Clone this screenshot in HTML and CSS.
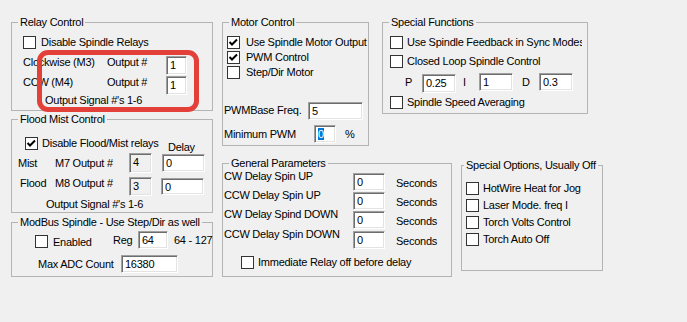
FILE: index.html
```html
<!DOCTYPE html>
<html lang="en">
<head>
<meta charset="UTF-8">
<title>Spindle Setup</title>
<link rel="stylesheet" href="styles.css">
</head>
<body>

<div class="dialog">

  <div class="col-left">
    <fieldset class="group relay">
      <legend>Relay Control</legend>
      <div class="row relay-cb"><span class="cb"></span><span class="cb-text">Disable Spindle Relays</span></div>
      <div class="row relay-out first">
        <span class="lbl w84">Clockwise (M3)</span>
        <span class="lbl w59">Output #</span>
        <span class="tb w21 h19">1</span>
      </div>
      <div class="row relay-out">
        <span class="lbl w84">CCW (M4)</span>
        <span class="lbl w59">Output #</span>
        <span class="tb w21 h19">1</span>
      </div>
      <div class="row relay-sig"><span class="lbl">Output Signal #'s 1-6</span></div>
    </fieldset>

    <fieldset class="group flood">
      <legend>Flood Mist Control</legend>
      <div class="row flood-cb">
        <span class="cb checked"><svg width="11" height="11" viewBox="0 0 11 11"><polyline points="1.5,5 4,7.5 9,2.5" fill="none" stroke="#000" stroke-width="2"/></svg></span>
        <span class="cb-text w126">Disable Flood/Mist relays</span>
        <span class="lbl delay">Delay</span>
      </div>
      <div class="row mist-row">
        <span class="lbl w37 dn4">Mist</span>
        <span class="lbl w74 dn4">M7 Output #</span>
        <span class="tb ro w23 h20">4</span>
        <span class="tb w43 h18 delay-box">0</span>
      </div>
      <div class="row flood-row">
        <span class="lbl w35">Flood</span>
        <span class="lbl w74">M8 Output #</span>
        <span class="tb ro w23 h19">3</span>
        <span class="tb w43 h17 delay-box2">0</span>
      </div>
      <div class="row flood-sig"><span class="lbl">Output Signal #'s 1-6</span></div>
    </fieldset>

    <fieldset class="group modbus">
      <legend>ModBus Spindle - Use Step/Dir as well</legend>
      <div class="row modbus-row">
        <span class="cb dn4"></span>
        <span class="cb-text enabled">Enabled</span>
        <span class="lbl w25 dn3">Reg</span>
        <span class="tb w30 h18">64</span>
        <span class="lbl range dn3">64 - 127</span>
      </div>
      <div class="row adc-row">
        <span class="lbl w83 dn3">Max ADC Count</span>
        <span class="tb w57 h18">16380</span>
      </div>
    </fieldset>
  </div>

  <div class="col-right">
    <div class="top-row">
      <fieldset class="group motor">
        <legend>Motor Control</legend>
        <div class="row motor-cb first">
          <span class="cb checked"><svg width="11" height="11" viewBox="0 0 11 11"><polyline points="1.5,5 4,7.5 9,2.5" fill="none" stroke="#000" stroke-width="2"/></svg></span>
          <span class="cb-text">Use Spindle Motor Output</span>
        </div>
        <div class="row motor-cb">
          <span class="cb checked"><svg width="11" height="11" viewBox="0 0 11 11"><polyline points="1.5,5 4,7.5 9,2.5" fill="none" stroke="#000" stroke-width="2"/></svg></span>
          <span class="cb-text">PWM Control</span>
        </div>
        <div class="row motor-cb">
          <span class="cb"></span>
          <span class="cb-text">Step/Dir Motor</span>
        </div>
        <div class="row pwm-row">
          <span class="lbl w84 dn2">PWMBase Freq.</span>
          <span class="tb w55 h18">5</span>
        </div>
        <div class="row minpwm-row">
          <span class="lbl w90 dn3">Minimum PWM</span>
          <span class="tb w22 h18"><span class="sel">0</span></span>
          <span class="lbl pct dn3">%</span>
        </div>
      </fieldset>

      <fieldset class="group special-fn">
        <legend>Special Functions</legend>
        <div class="row sf-cb first">
          <span class="cb"></span>
          <span class="cb-text clip">Use Spindle Feedback in Sync Modes</span>
        </div>
        <div class="row sf-cb">
          <span class="cb"></span>
          <span class="cb-text">Closed Loop Spindle Control</span>
        </div>
        <div class="row pid-row">
          <span class="lbl w17 dn3">P</span>
          <span class="tb w34 h19 dn1">0.25</span>
          <span class="lbl w16 dn3 pid-i">I</span>
          <span class="tb w34 h18">1</span>
          <span class="lbl w17 dn3 pid-d">D</span>
          <span class="tb w34 h18">0.3</span>
        </div>
        <div class="row sf-cb last">
          <span class="cb"></span>
          <span class="cb-text">Spindle Speed Averaging</span>
        </div>
      </fieldset>
    </div>

    <div class="bottom-row">
      <fieldset class="group general">
        <legend>General Parameters</legend>
        <div class="row gp-row r1">
          <span class="lbl w129 up3">CW Delay Spin UP</span>
          <span class="tb w32 h18">0</span>
          <span class="lbl secs">Seconds</span>
        </div>
        <div class="row gp-row r2">
          <span class="lbl w129 up3">CCW Delay Spin UP</span>
          <span class="tb w32 h18">0</span>
          <span class="lbl secs">Seconds</span>
        </div>
        <div class="row gp-row r2">
          <span class="lbl w129 up3">CW Delay Spind DOWN</span>
          <span class="tb w32 h18">0</span>
          <span class="lbl secs">Seconds</span>
        </div>
        <div class="row gp-row r4">
          <span class="lbl w129 up3">CCW Delay Spin DOWN</span>
          <span class="tb w32 h18">0</span>
          <span class="lbl secs">Seconds</span>
        </div>
        <div class="row gp-cb">
          <span class="cb"></span>
          <span class="cb-text">Immediate Relay off before delay</span>
        </div>
      </fieldset>

      <fieldset class="group options">
        <legend>Special Options, Usually Off</legend>
        <div class="row opt-cb first"><span class="cb"></span><span class="cb-text">HotWire Heat for Jog</span></div>
        <div class="row opt-cb"><span class="cb"></span><span class="cb-text">Laser Mode. freq I</span></div>
        <div class="row opt-cb"><span class="cb"></span><span class="cb-text">Torch Volts Control</span></div>
        <div class="row opt-cb"><span class="cb"></span><span class="cb-text">Torch Auto Off</span></div>
      </fieldset>
    </div>
  </div>

  <div class="callout"></div>
</div>

</body>
</html>
```

FILE: styles.css
```css
* {
  box-sizing: border-box;
}
body {
  margin: 0;
  background-color: #f0f0f0;
  font-family: "Liberation Sans", Arial, sans-serif;
  font-size: 11px;
  letter-spacing: -0.25px;
  line-height: 13px;
  color: #000;
}
.dialog {
  position: relative;
  display: flex;
  gap: 9px;
  padding: 16px 0 0 11px;
  height: 322px;
}

/* group boxes */
.group {
  margin: 0;
  padding: 0;
  min-width: 0;
  border: 1px solid #b4b4b4;
}
.group legend {
  margin-left: 6px;
  padding: 0 2px;
  line-height: 13px;
  white-space: nowrap;
}
.col-left {
  display: flex;
  flex-direction: column;
  width: 202px;
}
.relay { height: 95px; }
.flood { height: 100px; margin-top: 2px; }
.modbus { height: 61px; margin-top: 3px; }

.col-right {
  display: flex;
  flex-direction: column;
}
.top-row {
  display: flex;
  align-items: flex-start;
  gap: 13px;
}
.motor { width: 147px; height: 130px; }
.special-fn { width: 206px; height: 98px; }
.bottom-row {
  display: flex;
  align-items: flex-start;
  gap: 9px;
  margin-top: 11px;
}
.general { width: 230px; height: 120px; }
.options { width: 142px; height: 112px; margin-top: 2px; }
.options legend { margin-left: 2px; }

/* rows and controls */
.row {
  display: flex;
  align-items: flex-start;
}
.lbl {
  flex: none;
  white-space: nowrap;
}
.cb {
  flex: none;
  width: 13px;
  height: 13px;
  border: 1px solid #333;
  background: #fff;
}
.cb svg {
  display: block;
}
.cb-text {
  flex: none;
  margin-left: 4px;
  white-space: nowrap;
}
.tb {
  flex: none;
  background: #fff;
  border: 1px solid;
  border-color: #a0a0a0 #fff #fff #a0a0a0;
  box-shadow: inset 1px 1px 0 #6d6d6d, inset -1px -1px 0 #e3e3e3;
  padding: 2px 0 0 3px;
  white-space: nowrap;
  overflow: hidden;
}
.tb.ro {
  background: #f0f0f0;
}
.sel {
  background: #0078d7;
  color: #fff;
}

.w16 { width: 16px; }
.w17 { width: 17px; }
.w21 { width: 21px; }
.w22 { width: 22px; }
.w23 { width: 23px; }
.w25 { width: 25px; }
.w30 { width: 30px; }
.w32 { width: 32px; }
.w34 { width: 34px; }
.w35 { width: 35px; }
.w37 { width: 37px; }
.w43 { width: 43px; }
.w55 { width: 55px; }
.w57 { width: 57px; }
.w59 { width: 59px; }
.w74 { width: 74px; }
.w83 { width: 83px; }
.w84 { width: 84px; }
.w90 { width: 90px; }
.w126 { width: 126px; }
.w129 { width: 129px; }
.h17 { height: 17px; }
.h18 { height: 18px; }
.h19 { height: 19px; }
.h20 { height: 20px; }
.dn1 { margin-top: 1px; }
.dn2 { margin-top: 2px; }
.dn3 { margin-top: 3px; }
.dn4 { margin-top: 4px; }
.up3 { margin-top: -3px; }

/* relay control */
.relay-cb {
  margin-top: 7px;
  padding-left: 11px;
  height: 13px;
}
.relay-cb .cb-text { margin-left: 5px; }
.relay-out { padding-left: 11px; margin-top: 1px; }
.relay-out.first { margin-top: 7px; }
.relay-sig { margin-top: -1px; padding-left: 33px; }

/* flood mist */
.flood-cb {
  margin-top: 11px;
  padding-left: 13px;
  height: 13px;
}
.delay { margin-top: 4px; }
.mist-row { margin-top: 3px; padding-left: 6px; }
.delay-box { margin-left: 10px; margin-top: 1px; }
.flood-row { margin-top: 4px; padding-left: 8px; }
.delay-box2 { margin-left: 9px; margin-top: 1px; }
.flood-sig { margin-top: 2px; padding-left: 34px; }

/* modbus */
.modbus-row { margin-top: 2px; padding-left: 23px; }
.enabled { width: 60px; margin-left: 5px; margin-top: 5px; }
.range { margin-left: 6px; }
.adc-row { margin-top: 6px; padding-left: 26px; }

/* motor control */
.motor-cb {
  height: 15px;
  align-items: center;
  padding-left: 4px;
}
.motor-cb.first { margin-top: 6px; }
.motor-cb .cb-text { margin-left: 6px; }
.pwm-row { margin-top: 22px; padding-left: 1px; }
.minpwm-row { margin-top: 5px; padding-left: 1px; }
.pct { margin-left: 9px; }

/* special functions */
.sf-cb {
  height: 13px;
  margin-top: 6px;
  padding-left: 7px;
}
.sf-cb.first { margin-top: 7px; }
.sf-cb.last { margin-top: 3px; }
.clip {
  width: 175px;
  overflow: hidden;
}
.pid-row { margin-top: 5px; padding-left: 22px; }
.pid-i { margin-left: 7px; }
.pid-d { margin-left: 9px; }

/* general parameters */
.gp-row { height: 18px; padding-left: 1px; margin-top: 1px; }
.gp-row.r1 { margin-top: 3px; }
.gp-row.r4 { margin-top: 2px; }
.secs { margin-left: 11px; margin-top: 4px; }
.gp-cb { margin-top: 7px; padding-left: 18px; height: 13px; }

/* special options */
.opt-cb { height: 13px; margin-top: 4px; padding-left: 4px; }
.opt-cb.first { margin-top: 10px; }

/* red annotation drawn over the relay outputs */
.callout {
  position: absolute;
  left: 37px;
  top: 50px;
  width: 162px;
  height: 62px;
  border: 5px solid #e3403a;
  border-radius: 11px;
}
```
